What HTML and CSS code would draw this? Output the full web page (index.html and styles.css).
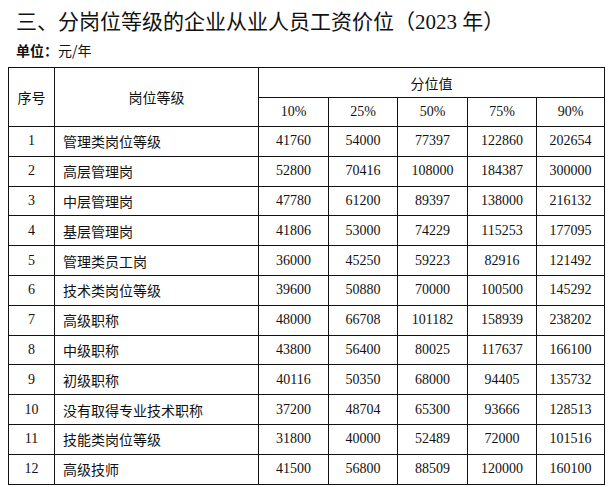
FILE: index.html
```html
<!DOCTYPE html>
<html lang="zh-CN">
<head>
<meta charset="utf-8">
<link rel="stylesheet" href="styles.css">
</head>
<body>
<div class="page">
  <h1 class="title">三、分岗位等级的企业从业人员工资价位（2023 年）</h1>
  <p class="unit"><span class="unit-label">单位：</span>元/年</p>
  <table class="wage">
    <colgroup>
      <col class="c-no"><col class="c-name"><col class="c-v1"><col class="c-v2"><col class="c-v3"><col class="c-v4"><col class="c-v5">
    </colgroup>
    <thead>
      <tr class="h1">
        <th rowspan="2" class="cjk">序号</th>
        <th rowspan="2" class="cjk">岗位等级</th>
        <th colspan="5" class="cjk">分位值</th>
      </tr>
      <tr class="h2">
        <th>10%</th><th>25%</th><th>50%</th><th>75%</th><th>90%</th>
      </tr>
    </thead>
    <tbody>
      <tr><td>1</td><td class="name">管理类岗位等级</td><td>41760</td><td>54000</td><td>77397</td><td>122860</td><td>202654</td></tr>
      <tr><td>2</td><td class="name">高层管理岗</td><td>52800</td><td>70416</td><td>108000</td><td>184387</td><td>300000</td></tr>
      <tr><td>3</td><td class="name">中层管理岗</td><td>47780</td><td>61200</td><td>89397</td><td>138000</td><td>216132</td></tr>
      <tr><td>4</td><td class="name">基层管理岗</td><td>41806</td><td>53000</td><td>74229</td><td>115253</td><td>177095</td></tr>
      <tr><td>5</td><td class="name">管理类员工岗</td><td>36000</td><td>45250</td><td>59223</td><td>82916</td><td>121492</td></tr>
      <tr><td>6</td><td class="name">技术类岗位等级</td><td>39600</td><td>50880</td><td>70000</td><td>100500</td><td>145292</td></tr>
      <tr><td>7</td><td class="name">高级职称</td><td>48000</td><td>66708</td><td>101182</td><td>158939</td><td>238202</td></tr>
      <tr><td>8</td><td class="name">中级职称</td><td>43800</td><td>56400</td><td>80025</td><td>117637</td><td>166100</td></tr>
      <tr><td>9</td><td class="name">初级职称</td><td>40116</td><td>50350</td><td>68000</td><td>94405</td><td>135732</td></tr>
      <tr><td>10</td><td class="name">没有取得专业技术职称</td><td>37200</td><td>48704</td><td>65300</td><td>93666</td><td>128513</td></tr>
      <tr><td>11</td><td class="name">技能类岗位等级</td><td>31800</td><td>40000</td><td>52489</td><td>72000</td><td>101516</td></tr>
      <tr><td>12</td><td class="name">高级技师</td><td>41500</td><td>56800</td><td>88509</td><td>120000</td><td>160100</td></tr>
    </tbody>
  </table>
</div>
</body>
</html>
```
FILE: styles.css
```css
html, body {
  margin: 0;
  padding: 0;
  background: #ffffff;
}
.page {
  padding: 9px 5px 0 8px;
  color: #111;
  font-family: "Liberation Serif", "Noto Sans CJK SC", serif;
}
.title {
  margin: 0;
  padding-left: 8px;
  font-size: 21px;
  line-height: 27px;
  font-weight: normal;
  color: #111;
}
.unit {
  margin: 4px 0 0;
  padding-left: 8px;
  font-family: "Noto Sans CJK SC", sans-serif;
  font-size: 14px;
  line-height: 20px;
  color: #111;
}
.unit-label {
  font-weight: bold;
}
.wage {
  margin-top: 7px;
  border-collapse: collapse;
  width: 596px;
  table-layout: fixed;
  font-size: 14px;
  color: #111;
}
.c-no { width: 46px; }
.c-name { width: 204px; }
.c-v1 { width: 70px; }
.c-v2 { width: 69px; }
.c-v3 { width: 70px; }
.c-v4 { width: 69px; }
.c-v5 { width: 68px; }
.wage th, .wage td {
  border: 1px solid #111;
  padding: 0;
  text-align: center;
  vertical-align: middle;
  font-weight: normal;
}
.wage .cjk {
  font-family: "Noto Sans CJK SC", sans-serif;
  font-size: 14px;
}
.h1 th { height: 29px; }
.h2 th { height: 28px; }
.wage tbody td { height: 28.8px; }
.wage td.name {
  text-align: left;
  padding-left: 8px;
  font-family: "Noto Sans CJK SC", sans-serif;
}
```
